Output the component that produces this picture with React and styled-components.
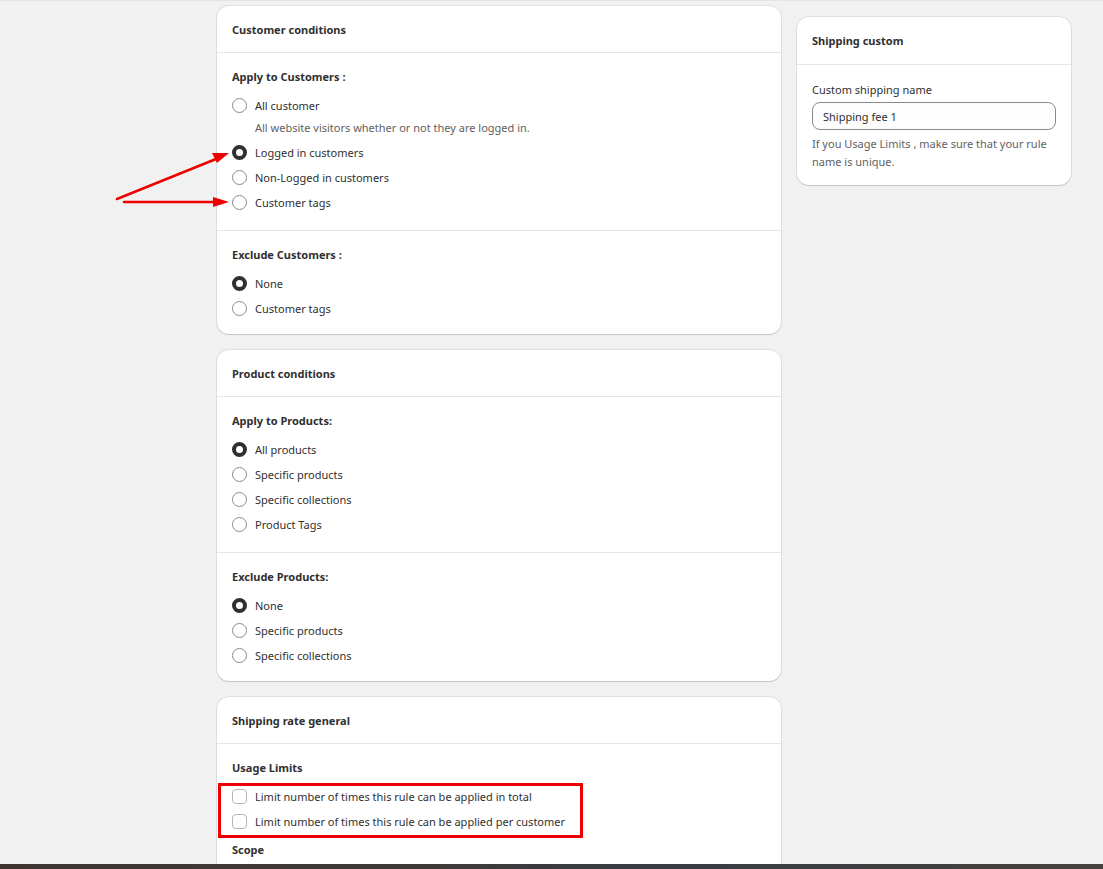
import React from "react";
import styled, { createGlobalStyle } from "styled-components";

const Global = createGlobalStyle`
  html, body { margin: 0; padding: 0; }
  body {
    background: #f1f1f1;
    font-family: "Noto Sans", "Open Sans", "Liberation Sans", sans-serif;
    color: #303030;
    -webkit-font-smoothing: antialiased;
  }
  * { box-sizing: border-box; }
`;

const Screen = styled.div`
  height: 869px;
  display: flex;
  flex-direction: column;
  overflow: hidden;
`;

const Viewport = styled.div`
  flex: 1;
  overflow: hidden;
  border-top: 1px solid #e4e4e4;
  position: relative;
`;

const Taskbar = styled.div`
  height: 5px;
  flex: none;
  background: linear-gradient(90deg, #3e3533 0%, #3d3a3a 40%, #383c42 60%, #46423e 100%);
`;

const Layout = styled.div`
  display: flex;
  align-items: flex-start;
  gap: 16px;
  padding: 5px 0 0 217px;
`;

const MainColumn = styled.div`
  width: 564px;
  display: flex;
  flex-direction: column;
  gap: 16px;
`;

const SideColumn = styled.div`
  width: 274px;
  margin-top: 11px;
`;

const Card = styled.div`
  background: #fff;
  border-radius: 12px;
  box-shadow: 0 0 0 1px rgba(0, 0, 0, 0.07), 0 1px 1px rgba(0, 0, 0, 0.12);
  overflow: hidden;
`;

const CardHeader = styled.div`
  height: ${(p) => p.$h || 47}px;
  display: flex;
  align-items: center;
  padding: 0 15px;
  border-bottom: 1px solid #e6e6e6;
  font-size: 11px;
  font-weight: 700;
  color: #303030;
`;

const Section = styled.div`
  padding: 14px 15px ${(p) => p.$pb ?? 14}px;
  & + & {
    border-top: 1px solid #e6e6e6;
  }
`;

const SectionTitle = styled.div`
  font-size: 11px;
  font-weight: 700;
  line-height: 20px;
  margin-bottom: 6px;
  margin-top: ${(p) => p.$mt || 0}px;
  color: #303030;
`;

const OptionRow = styled.label`
  display: flex;
  align-items: center;
  gap: 8px;
  height: 25px;
  font-size: 11px;
  color: #303030;
`;

const RadioDot = styled.span`
  width: 15px;
  height: 15px;
  border-radius: 50%;
  flex: none;
  background: #fff;
  border: ${(p) => (p.$checked ? "4px solid #303030" : "1px solid #8a8a8a")};
`;

const CheckBox = styled.span`
  width: 15px;
  height: 15px;
  border-radius: 4px;
  flex: none;
  background: #fff;
  border: 1px solid #b5b5b5;
`;

const HelpText = styled.div`
  font-size: 11px;
  line-height: 20px;
  color: #616161;
  padding-left: 23px;
  margin-bottom: 2px;
`;

const FieldLabel = styled.div`
  font-size: 11px;
  line-height: 20px;
  color: #303030;
  margin-top: 1px;
`;

const TextInput = styled.div`
  height: 28px;
  margin-top: 2px;
  border: 1px solid #8a8a8a;
  border-radius: 8px;
  background: #fdfdfd;
  display: flex;
  align-items: center;
  padding: 0 10px;
  font-size: 11px;
  color: #303030;
`;

const FieldHelp = styled.div`
  margin-top: 5px;
  font-size: 11px;
  line-height: 18px;
  color: #616161;
`;

const Overlay = styled.svg`
  position: absolute;
  left: 0;
  top: 0;
  pointer-events: none;
`;

const HighlightBox = styled.div`
  position: absolute;
  left: 218px;
  top: 782px;
  width: 365px;
  height: 55px;
  border: 3px solid #ee0000;
  pointer-events: none;
`;

function Radio({ label, checked }) {
  return (
    <OptionRow>
      <RadioDot $checked={checked} />
      {label}
    </OptionRow>
  );
}

function Check({ label }) {
  return (
    <OptionRow>
      <CheckBox />
      {label}
    </OptionRow>
  );
}

export default function App() {
  return (
    <>
      <Global />
      <Screen>
        <Viewport>
          <Layout>
            <MainColumn>
              <Card>
                <CardHeader>Customer conditions</CardHeader>
                <Section $pb={15}>
                  <SectionTitle>Apply to Customers :</SectionTitle>
                  <Radio label="All customer" />
                  <HelpText>All website visitors whether or not they are logged in.</HelpText>
                  <Radio label="Logged in customers" checked />
                  <Radio label="Non-Logged in customers" />
                  <Radio label="Customer tags" />
                </Section>
                <Section $pb={13}>
                  <SectionTitle>Exclude Customers :</SectionTitle>
                  <Radio label="None" checked />
                  <Radio label="Customer tags" />
                </Section>
              </Card>

              <Card>
                <CardHeader>Product conditions</CardHeader>
                <Section $pb={15}>
                  <SectionTitle>Apply to Products:</SectionTitle>
                  <Radio label="All products" checked />
                  <Radio label="Specific products" />
                  <Radio label="Specific collections" />
                  <Radio label="Product Tags" />
                </Section>
                <Section $pb={13}>
                  <SectionTitle>Exclude Products:</SectionTitle>
                  <Radio label="None" checked />
                  <Radio label="Specific products" />
                  <Radio label="Specific collections" />
                </Section>
              </Card>

              <Card>
                <CardHeader>Shipping rate general</CardHeader>
                <Section $pb={40}>
                  <SectionTitle>Usage Limits</SectionTitle>
                  <Check label="Limit number of times this rule can be applied in total" />
                  <Check label="Limit number of times this rule can be applied per customer" />
                  <SectionTitle $mt={6}>Scope</SectionTitle>
                </Section>
              </Card>
            </MainColumn>

            <SideColumn>
              <Card>
                <CardHeader $h={48}>Shipping custom</CardHeader>
                <Section>
                  <FieldLabel>Custom shipping name</FieldLabel>
                  <TextInput>Shipping fee 1</TextInput>
                  <FieldHelp>
                    If you Usage Limits , make sure that your rule name is unique.
                  </FieldHelp>
                </Section>
              </Card>
            </SideColumn>
          </Layout>

          <Overlay width="260" height="260" viewBox="0 0 260 260">
            <g stroke="#ee0000" strokeWidth="2.5" strokeLinecap="round">
              <line x1="117" y1="198" x2="216" y2="158" />
              <line x1="124" y1="201" x2="214" y2="201" />
            </g>
            <g fill="#ee0000">
              <polygon points="229,152 212,152 217,162" />
              <polygon points="229,201 213,196 213,206" />
            </g>
          </Overlay>
          <HighlightBox />
        </Viewport>
        <Taskbar />
      </Screen>
    </>
  );
}
